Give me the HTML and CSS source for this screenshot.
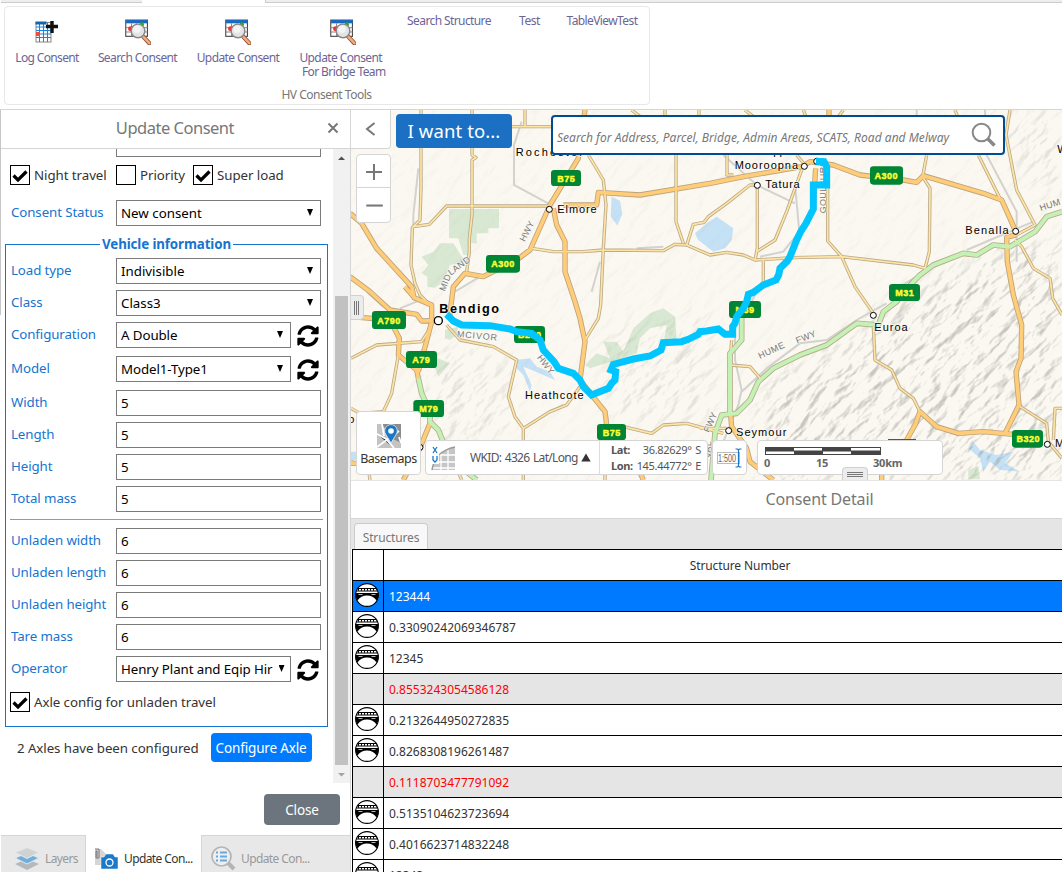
FILE: index.html
```html
<!DOCTYPE html>
<html lang="en">
<head>
<meta charset="utf-8">
<title>HV Consent Tools</title>
<link rel="stylesheet" href="styles.css">
</head>
<body>
<svg class="defs" width="0" height="0" aria-hidden="true">
  <symbol id="search-doc" viewBox="0 0 24 24">
    <rect x=".7" y="1" width="20" height="15" fill="#fff" stroke="#444"/>
    <rect x="1" y="1" width="20" height="3" fill="#1769c4"/>
    <path d="M1 8h20M1 12h20M6 4v12M11 4v12M16 4v12" stroke="#777" stroke-width=".8"/>
    <circle cx="5" cy="9" r="2.2" fill="#e33"/><circle cx="15.500" cy="5" r="2" fill="#2a2"/>
    <path d="M17 16.500l5.500 5.800" stroke="#9b563b" stroke-width="4" stroke-linecap="round"/>
    <path d="M17 16.500l5.500 5.800" stroke="#f0ad84" stroke-width="2.200" stroke-linecap="round"/>
    <circle cx="12" cy="11" r="6.300" fill="#e4e4e4" stroke="#888" stroke-width="1.300"/>
    <circle cx="11" cy="9.500" r="3.500" fill="#f4f4f4"/>
  </symbol>
  <symbol id="refresh" viewBox="0 0 512 512">
    <path d="M370.720 133.280C339.458 104.008 298.888 87.962 255.848 88c-77.458.068-144.328 53.178-162.791 126.850-1.344 5.363-6.122 9.150-11.651 9.150H24.103c-7.498 0-13.194-6.807-11.807-14.176C33.933 94.924 134.813 8 256 8c66.448 0 126.791 26.136 171.315 68.685L463.030 40.970C478.149 25.851 504 36.559 504 57.941V192c0 13.255-10.745 24-24 24H345.941c-21.382 0-32.090-25.851-16.971-40.971l41.750-41.749zM32 296h134.059c21.382 0 32.090 25.851 16.971 40.971l-41.750 41.750c31.262 29.273 71.835 45.319 114.876 45.280 77.418-.070 144.315-53.144 162.787-126.849 1.344-5.363 6.122-9.150 11.651-9.150h57.304c7.498 0 13.194 6.807 11.807 14.176C478.067 417.076 377.187 504 256 504c-66.448 0-126.791-26.136-171.315-68.685L48.970 471.030C33.851 486.149 8 475.441 8 454.059V320c0-13.255 10.745-24 24-24z"/>
  </symbol>
  <symbol id="tick" viewBox="0 0 18 18"><path d="M2.500 9.500L7 14 15.500 5.500" fill="none" stroke="#000" stroke-width="3.200"/></symbol>
  <symbol id="bridge" viewBox="0 0 24 24">
    <circle cx="12" cy="12" r="11.400" fill="#fff" stroke="#000" stroke-width="1.100"/>
    <path d="M2.500 5.500h19M1.500 8h21" stroke="#000" stroke-width="1"/>
    <path d="M3 6.800h18.500" stroke="#000" stroke-width="2" stroke-dasharray="1 2"/>
    <path d="M.8 10H23.200V14.500L21.500 17.500Q18 12.500 12 12.500T2.500 17.500L.8 14.500Z"/>
    <path d="M3.500 11.500h4M16.500 11.500h4" stroke="#fff" stroke-width=".7"/>
  </symbol>
</svg>
<div class="app">
  <div class="ribbon">
    <div class="ribbon-tabs"><span></span><span></span><span></span></div>
    <div class="tools">
      <div class="tool t1"><svg width="24" height="24" viewBox="0 0 24 24"><rect x="1" y="2.500" width="15" height="19.500" fill="#fff" stroke="#888"/><path d="M1 7h15M1 10.500h15M1 14h15M1 17.500h15M4.500 3v19M8.500 3v19M12.500 3v19" stroke="#1585df"/><path d="M.5 3h11" stroke="#1264ad" stroke-width="3"/><rect x="1" y="12" width="4" height="4" fill="#f04a38"/><path d="M11 6.500h12M17 1v12" stroke="#111" stroke-width="3.400"/></svg><span>Log Consent</span></div>
      <div class="tool t2"><svg width="26" height="26"><use href="#search-doc"/></svg><span>Search Consent</span></div>
      <div class="tool t3"><svg width="26" height="26"><use href="#search-doc"/></svg><span>Update Consent</span></div>
      <div class="tool t4"><svg width="26" height="26"><use href="#search-doc"/></svg><span>Update Consent<br>&nbsp;For Bridge Team</span></div>
      <div class="tool text t5">Search Structure</div><div class="tool text t6">Test</div><div class="tool text t7">TableViewTest</div>
      <div class="tools-title">HV Consent Tools</div>
    </div>
  </div>
  <div class="main">
    <div class="edge"></div>
    <section class="panel">
      <header class="panel-head"><span>Update Consent</span><svg width="12" height="12" viewBox="0 0 12 12"><path d="M1.500 1.500l9 9M10.500 1.500l-9 9" stroke="#777" stroke-width="2"/></svg></header>
      <div class="panel-body">
        <div class="form">
          <div class="row cut"><label>Priority</label><div class="field"></div></div>
          <div class="checks">
            <i class="box"><svg width="18" height="18"><use href="#tick"/></svg></i><span class="c1">Night travel</span>
            <i class="box"></i><span class="c2">Priority</span>
            <i class="box"><svg width="18" height="18"><use href="#tick"/></svg></i><span>Super load</span>
          </div>
          <div class="row status"><label>Consent Status</label><div class="field select">New consent</div></div>
          <div class="group">
            <div class="legend">Vehicle information</div>
            <div class="row"><label>Load type</label><div class="field select">Indivisible</div></div>
            <div class="row"><label>Class</label><div class="field select">Class3</div></div>
            <div class="row tall"><label>Configuration</label><div class="field select">A Double</div><svg width="22" height="22"><use href="#refresh"/></svg></div>
            <div class="row tall"><label>Model</label><div class="field select">Model1-Type1</div><svg width="22" height="22"><use href="#refresh"/></svg></div>
            <div class="row"><label>Width</label><div class="field">5</div></div>
            <div class="row"><label>Length</label><div class="field">5</div></div>
            <div class="row"><label>Height</label><div class="field">5</div></div>
            <div class="row"><label>Total mass</label><div class="field">5</div></div>
            <div class="rule"></div>
            <div class="row"><label>Unladen width</label><div class="field">6</div></div>
            <div class="row"><label>Unladen length</label><div class="field">6</div></div>
            <div class="row"><label>Unladen height</label><div class="field">6</div></div>
            <div class="row"><label>Tare mass</label><div class="field">6</div></div>
            <div class="row tall"><label>Operator</label><div class="field select"><span class="clip">Henry Plant and Eqip Hir</span></div><svg width="22" height="22"><use href="#refresh"/></svg></div>
            <div class="checks axle"><i class="box"><svg width="18" height="18"><use href="#tick"/></svg></i><span>Axle config for unladen travel</span></div>
          </div>
          <div class="configured"><span>2 Axles have been configured</span><button class="btn blue">Configure Axle</button></div>
        </div>
        <div class="scroll"><svg width="17" height="18" viewBox="0 0 17 18"><path d="M5 11h7L8.500 7.500z" fill="#505050"/></svg><div class="thumb"></div><svg width="17" height="18" viewBox="0 0 17 18"><path d="M5 8h7L8.500 11.500z" fill="#a3a3a3"/></svg></div>
      </div>
      <div class="panel-foot"><button class="btn grey">Close</button></div>
      <nav class="tabs">
        <div class="tab w1"><svg width="26" height="24" viewBox="0 0 26 24"><path d="M1 17l12-5 12 5-12 6z" fill="#b5b9bb"/><path d="M1 11l12-5 12 5-12 6z" fill="#70aede" stroke="#e8e8e8"/><path d="M1 5.500L13 .5l12 5-12 6z" fill="#cfd2d3" stroke="#e8e8e8"/></svg><span>Layers</span></div>
        <div class="tab active w2"><svg width="24" height="22" viewBox="0 0 24 22"><path d="M2 1h5l5 5v11H1V1" fill="#d5d5d5"/><path d="M1 1h4v9H2V3h1v6" fill="none" stroke="#777"/><path d="M7 9h3l2-3h7l2 3h3v12H7z" fill="#1b79ca" stroke="#fff" stroke-width=".5"/><circle cx="15.500" cy="14.500" r="3.500" fill="none" stroke="#fff" stroke-width="1.300"/></svg><span>Update Con...</span></div>
        <div class="tab w3"><svg width="25" height="25" viewBox="0 0 25 25"><path d="M17 17l6 6" stroke="#b4b4b4" stroke-width="4"/><circle cx="10.500" cy="10.500" r="9.500" fill="#eee" stroke="#b4b4b4" stroke-width="1.700"/><path d="M5 6.500h2M9 6.500h7M5 10.500h2M9 10.500h7M5 14.500h2M9 14.500h7" stroke="#66a9dd" stroke-width="2"/></svg><span>Update Con...</span></div>
      </nav>
    </section>
    <section class="right">
      <div class="map">
        <!-- Map units are thirds of a pixel -->
        <svg class="canvas" width="711" height="370" viewBox="3 15 2133 1110">
          <defs>
            <filter id="relief" x="0" y="0" width="100%" height="100%" color-interpolation-filters="sRGB"><feTurbulence type="fractalNoise" baseFrequency=".012 .032" numOctaves="4" seed="8"/><feColorMatrix values="0 0 0 0 0 0 0 0 0 0 0 0 0 0 0 1 0 0 0 0"/><feDiffuseLighting surfaceScale="20" lighting-color="#fff"><feDistantLight azimuth="230" elevation="50"/></feDiffuseLighting><feColorMatrix values="0 0 0 0 .55 0 0 0 0 .55 0 0 0 0 .53 -1.600 0 0 0 1.120"/></filter>
            <filter id="soft"><feGaussianBlur stdDeviation="35"/></filter>
            <mask id="hills"><rect width="2200" height="1200" fill="#0a0a0a"/><g filter="url(#soft)" fill="#747474"><path d="M1240 850L1500 720 1640 600 1900 460 2136 400V1125H1240z"/><path d="M1900 20H2136V300L2050 250zM780 680L1080 640V940H800zM220 720L460 760 480 950 280 1100z" fill="#3a3a3a"/></g></mask>
            <path id="minor" d="M213 15V250L210 345 187 368 183 480 195 535 210 570 240 600M190 365L238 358 290 303H600M366 15V150L378 158 366 165V330L358 400V440L350 500M525 15V65H485M525 65H610M545 430L610 440H700L760 435 940 437 975 418 1010 420 1030 358 1062 352 1075 335 1130 295 1200 240H1222M715 150L760 225 768 300 760 430 752 600 745 640 705 705M845 15L890 50M945 15V40M1047 15V50M978 150V350L1000 415M1010 420L1080 450 1130 442 1180 450 1215 465 1330 458 1475 455 1690 480 1725 490M1131 150V210H1150M1222 240V430L1215 465M1355 195L1310 320 1275 405 1220 440M1240 465V530M1433 185V408L1475 455 1515 545 1570 625M1730 150L1718 215 1740 250 1738 440 1725 490M1885 150L1955 290M1980 15L1968 90 2000 255 2055 360 1990 395M1995 405L2015 425 2050 490 2100 520 2108 580 2136 630M1185 15L1210 35M1360 15L1370 40M1480 15L1465 35M1815 15L1825 40M1340 150L1365 180M3 760L80 720 215 710 240 670M145 750L125 865 100 920 30 925 3 910M290 660L330 705 430 725 500 765 475 875 495 935 520 970V1125M520 970L600 920 650 900 690 845M820 965L905 985 940 960 1010 955 1120 985M1570 665L1575 765 1625 795 1650 850 1690 880 1710 920M2010 905L2090 955 2095 1010 2136 1060M2136 910H2115L2110 1005M1145 705L1140 780 1200 785 1235 825M1050 970L1130 970M60 1125L55 1090 3 1070M335 1125L320 1090M765 1125V1040"/>
            <path id="major" d="M705 15L685 160 600 300 540 435 500 465 400 515 345 505 310 545 298 640M610 310L620 360 645 410V500L675 590 690 640 705 710 690 825 725 870 765 920 775 1000M640 300H740L745 262 870 270 1080 235 1180 215 1355 185 1380 170 1450 180 1530 210 1660 225 1700 232 1720 212 1900 265 1955 285 1980 340 1997 380M1997 390L1970 397 1972 470 1990 570 2015 660 2013 760 1998 800 2007 900 1965 985M1670 1005L1695 960 1710 920 1760 965 1825 985 1900 980 1990 988M0 325L35 355 80 430 185 545 192 578 245 600V650L228 715 205 800M0 515L60 560 120 615 200 628 215 648 262 647M165 545L195 580M3 635L120 645 148 700 145 750 200 795 205 820M240 955L205 1040 160 1125M1437 15V40M1397 190L1390 300M1142 930L1145 965 1190 1030 1200 1070 1270 1125M3 1075H60M1595 1125V1100M880 1125L865 1090"/>
            <path id="motorway" d="M205 820L215 865 240 920V950L265 975 300 1060 380 1125M1083 1125L1095 985 1115 930 1160 925 1200 885 1225 830 1270 790 1350 750 1430 720 1520 655 1585 660 1600 620 1640 590 1690 530 1710 510 1750 480 1840 445 1880 450 1930 420 1980 425 2055 380 2090 335 2136 320M1140 925V745L1175 705V600"/>
          </defs>
          <rect width="2200" height="1200" fill="#faf8f0"/>
          <g fill="#d9e8d2"><path d="M297 312H447V370H415V385H380V415H360V450H340L325 400H297zM270 415H310L345 470 300 480 280 530 255 548 232 545V515L215 505 235 480 215 455 250 440zM705 780L740 745 780 760 760 710 800 710 820 740 850 670 900 625 940 610 975 635 980 700 940 720 950 660 900 670 870 700 860 745 800 765 720 790zM285 675L325 665 320 690 300 705 285 700zM240 750L300 775 265 815z"/><path d="M1855 1095l30-12 5 40h-35z"/></g>
          <g fill="#c5e1f5"><path d="M785 275l25 12 7 40-15 35-20-28zM1035 385L1070 355 1100 335 1150 370 1145 405 1125 430 1090 440 1045 405zM495 765L540 760 560 785 600 800 615 825 580 810 545 795 520 785 545 840 540 860 520 810 500 790zM3 1040h25l-10 25H3z"/><path d="M1870 1010L1890 1035 1940 1050 1990 1040 1965 1075 2010 1100 1950 1095 1920 1070 1900 1100 1890 1060 1855 1030z"/></g>
          <g mask="url(#hills)"><rect x="-300" y="-700" width="2800" height="2500" transform="rotate(-42 1068 570)" filter="url(#relief)"/></g>
          <g fill="none" stroke="#d3d2cf" stroke-width="6"><path d="M515 50L492 120V240L600 298M205 190L190 330 190 360M1120 150L1220 240 1335 295M1335 240L1348 380 1300 440 1230 455M1700 15V60M1905 15L1910 150 2000 320V470M1650 545L1740 490M1850 435L2050 350M1155 635V765L1175 855 1165 900 1120 1010M1175 860L1250 790 1350 715 1430 705 1520 645 1610 595M750 470L725 560M860 430L940 425M315 560L390 515M600 920L640 900M50 560L100 605M150 610L200 590M1235 530L1205 590"/></g>
          <g fill="none" stroke-linejoin="round">
            <use href="#minor" stroke="#baa98a" stroke-width="10"/><use href="#major" stroke="#bda27c" stroke-width="16"/><use href="#motorway" stroke="#b5ab8c" stroke-width="17"/>
            <use href="#minor" stroke="#ffe4a3" stroke-width="5"/><use href="#major" stroke="#ffcc78" stroke-width="11"/><use href="#motorway" stroke="#c4f1b4" stroke-width="12"/>
          </g>
          <g class="road-name"><text transform="translate(524 412) rotate(-63)">HWY</text><text transform="translate(284 560) rotate(-68)">MID</text><text transform="translate(302 512) rotate(-36)">LAND</text><text transform="translate(320 696) rotate(5)" textLength="122">MCIVOR</text><text transform="translate(560 758) rotate(52)">HWY</text><text transform="translate(1427 325) rotate(-90)">GOULBURN</text><text transform="translate(1230 762) rotate(-25)" textLength="84">HUME</text><text transform="translate(1342 716) rotate(-22)">FWY</text><text transform="translate(1076 984) rotate(-65)">FWY</text><text transform="translate(1082 1060) rotate(-88)">VAL</text><text transform="translate(2072 318) rotate(-18)">HUM</text></g>
          <g class="shields"><rect x="603" y="195" width="90" height="48" rx="10"/><rect x="408" y="450" width="102" height="53" rx="10"/><rect x="1560" y="184" width="99" height="55" rx="10"/><rect x="1617" y="537" width="93" height="51" rx="10"/><rect x="1137" y="588" width="96" height="51" rx="10"/><rect x="66" y="618" width="102" height="54" rx="10"/><rect x="168" y="738" width="93" height="51" rx="10"/><rect x="190" y="885" width="92" height="51" rx="10"/><rect x="492" y="663" width="93" height="51" rx="10"/><rect x="741" y="957" width="87" height="48" rx="10"/><rect x="1986" y="975" width="93" height="53" rx="10"/><rect x="1614" y="1002" width="84" height="30"/></g>
          <g class="shield-text"><text x="649" y="230">B75</text><text x="459" y="486">A300</text><text x="1609" y="222">A300</text><text x="1664" y="573">M31</text><text x="1185" y="624">M39</text><text x="117" y="656">A790</text><text x="214" y="774">A79</text><text x="236" y="921">M79</text><text x="539" y="698">B280</text><text x="785" y="993">B75</text><text x="2035" y="1010">B320</text></g>
          <g class="city"><text x="497" y="152" textLength="202">Rochester</text><text x="622" y="323" textLength="118">Elmore</text><text x="1154" y="191" textLength="190">Mooroopna</text><text x="1246" y="249" textLength="103">Tatura</text><text x="1846" y="388" textLength="130">Benalla</text><text x="1573" y="678" textLength="100">Euroa</text><text x="1158" y="993" textLength="151">Seymour</text><text x="525" y="882" textLength="176">Heathcote</text><text class="big" x="268" y="625" textLength="179">Bendigo</text><text x="2115" y="1027">M</text><text x="2122" y="143">W</text><text x="1270" y="151">pp</text><text x="-5" y="955">o</text></g>
          <g fill="#fff" stroke="#000" stroke-width="3"><circle cx="598" cy="313" r="9"/><circle cx="1363" cy="184" r="9"/><circle cx="1400" cy="169" r="9"/><circle cx="1222" cy="241" r="9"/><circle cx="1997" cy="379" r="9"/><circle cx="1570" cy="631" r="9"/><circle cx="1136" cy="977" r="9"/><circle cx="2092" cy="1018" r="9"/><circle cx="265" cy="647" r="12" stroke-width="4"/><circle cx="210" cy="1027" r="9"/></g>
          <path class="route" d="M1398 169L1422 170 1430 185V240H1390V312L1368 355 1352 380 1340 405 1320 455 1312 468 1290 490 1286 510 1278 525 1240 540 1210 562 1195 568 1190 590 1180 610 1160 635 1155 655 1148 665V688L1125 688 1105 672 1070 678 1050 680 1045 688 1015 703 995 710 940 713 933 735 900 753 850 762 790 778 783 795 797 800 795 825 785 835 775 850 725 870 700 845 690 825 670 805 625 790 612 770 580 735 575 720 570 705 545 685 500 680 480 672 420 662 335 660 310 648 290 628"/>
        </svg>
        <div class="back"><svg width="12" height="14" viewBox="0 0 12 14"><path d="M10.500 1L3 7l7.500 6" fill="none" stroke="#777" stroke-width="2"/></svg></div>
        <div class="zoomer"><svg width="32" height="32" viewBox="0 0 32 32"><path d="M9 17h16M17 9v16" stroke="#777" stroke-width="2"/></svg><svg width="32" height="32" viewBox="0 0 32 32"><path d="M9 17h16" stroke="#777" stroke-width="2"/></svg></div>
        <div class="want">I want to...</div>
        <div class="search"><span>Search for Address, Parcel, Bridge, Admin Areas, SCATS, Road and Melway</span><svg width="26" height="26" viewBox="0 0 26 26"><path d="M16.500 16.500l7 7" stroke="#888" stroke-width="3.600"/><circle cx="10.500" cy="10.500" r="8.800" fill="none" stroke="#888" stroke-width="2"/></svg></div>
        <div class="grip left"></div>
        <div class="basemaps"><svg width="24" height="24" viewBox="0 0 24 24"><rect width="24" height="24" fill="#c3c3c3"/><path d="M5 0h19v19L14 14z" fill="#8c8c8c"/><path d="M0 10L9 15 17 24M0 23L22 7M22 13l2 6M5 0l2 12" stroke="#fff" stroke-width="1.800"/><path d="M14 19L8.500 10a6.300 6.300 0 1111 0z" fill="#1b78c9" stroke="#fff" stroke-width=".7"/><circle cx="14" cy="7" r="2.800" fill="#fff"/></svg><span>Basemaps</span></div>
        <div class="coords"><div class="wkid"><svg width="26" height="26" viewBox="0 0 26 26"><path d="M2 25C4 12 11 5 25 2v23z" fill="#c6c6c6"/><path d="M3 17h22M7 10h18M11 25V8M18 25V4M3 23h22" stroke="#fff" stroke-width="1.300"/><path d="M2 25C4 12 11 5 25 2" fill="none" stroke="#999" stroke-width="1.500"/><rect width="9" height="19" fill="#fff"/><path d="M3 2l4 6M7 2L3 8M3 11v4l2 2 2-2v-4" fill="none" stroke="#1b78c9" stroke-width="1.300"/></svg><span>WKID: 4326 Lat/Long</span><svg width="10" height="9" viewBox="0 0 10 9"><path d="M5 .5L9.700 8.500H.3z" fill="#333"/></svg></div><div class="latlon"><b>Lat:</b><span>36.82629° S</span><b>Lon:</b><span>145.44772° E</span></div></div>
        <div class="ratio"><svg width="26" height="20" viewBox="0 0 26 20"><rect x=".5" y="4.500" width="22" height="11" fill="#fff" stroke="#bbb"/><text x="1" y="14" textLength="18" lengthAdjust="spacingAndGlyphs">1:500</text><path d="M18.500 1h2l1 1 1-1h2M21.500 1v18M18.500 19h2l1-1 1 1h2" fill="none" stroke="#1b78c9" stroke-width="1.200"/></svg></div>
        <div class="scale"><svg width="116" height="8" viewBox="0 0 116 8"><rect width="116" height="8" fill="#444"/><path d="M29 2.300h28M86 2.300h29M1 5.700h28M58 5.700h28" stroke="#fff" stroke-width="2.600"/></svg><span class="s0">0</span><span class="s15">15</span><span class="s30">30km</span></div>
        <div class="grip bottom"></div>
      </div>
      <div class="detail-head">Consent Detail</div>
      <div class="detail-tabs"><div>Structures</div></div>
      <div class="table">
        <div class="tr th"><i></i><span>Structure Number</span></div>
        <div class="tr sel"><i><svg width="24" height="24"><use href="#bridge"/></svg></i><span>123444</span></div>
        <div class="tr"><i><svg width="24" height="24"><use href="#bridge"/></svg></i><span>0.33090242069346787</span></div>
        <div class="tr"><i><svg width="24" height="24"><use href="#bridge"/></svg></i><span>12345</span></div>
        <div class="tr bad"><i></i><span>0.8553243054586128</span></div>
        <div class="tr"><i><svg width="24" height="24"><use href="#bridge"/></svg></i><span>0.2132644950272835</span></div>
        <div class="tr"><i><svg width="24" height="24"><use href="#bridge"/></svg></i><span>0.8268308196261487</span></div>
        <div class="tr bad"><i></i><span>0.1118703477791092</span></div>
        <div class="tr"><i><svg width="24" height="24"><use href="#bridge"/></svg></i><span>0.5135104623723694</span></div>
        <div class="tr"><i><svg width="24" height="24"><use href="#bridge"/></svg></i><span>0.4016623714832248</span></div>
        <div class="tr"><i><svg width="24" height="24"><use href="#bridge"/></svg></i><span>12343</span></div>
      </div>
    </section>
  </div>
</div>
</body>
</html>
```
FILE: styles.css
```css
* { box-sizing: border-box; }
body { margin: 0; background: #fff; color: #333; font: 13.3px/18px "Noto Sans", "Open Sans", sans-serif; }
svg { display: block; flex: none; }
.defs { position: absolute; }
.app { width: 1062px; height: 872px; overflow: hidden; display: flex; flex-direction: column; }
.ribbon { height: 110px; flex: none; border-bottom: 1px solid #d5d5d5; display: flex; flex-direction: column; }
.ribbon-tabs { display: grid; grid-template-columns: 141px 123px 1fr; height: 3px; padding-left: 1px; }
.ribbon-tabs span { background: #eee; border-bottom: 1px solid #ccc; }
.ribbon-tabs span:nth-child(2) { background: #fff; border: 0; }
.ribbon-tabs span:nth-child(3) { border-left: 1px solid #ccc; }
.tools { margin: 3px 0 0 4px; width: 646px; height: 99px; border: 1px solid #e8e8e8; border-radius: 4px; display: grid; grid-template-columns: 84px 97px 104px 105px 108px 53px 92px; grid-template-rows: 81px 1fr; color: #6b6596; font-size: 12px; line-height: 14px; letter-spacing: -.6px; white-space: nowrap; }
.tool { display: flex; flex-direction: column; align-items: center; padding-top: 12px; gap: 6px; }
.tool svg { height: 26px; }
.t1 span { letter-spacing: -.65px; }
.tool.text { padding-top: 7px; letter-spacing: -.6px; }
.tool.t6 { letter-spacing: -.4px; }
.tools-title { grid-column: 1 / -1; color: #777; text-align: center; letter-spacing: -.5px; }
.main { flex: 1; min-height: 0; display: flex; }
.edge { width: 1px; height: 205px; background: #c6c6c6; flex: none; }
.panel { width: 350px; flex: none; border-right: 1px solid #d5d5d5; display: flex; flex-direction: column; }
.panel-head { height: 39px; border-bottom: 1px solid #d5d5d5; display: flex; align-items: center; justify-content: flex-end; padding: 0 11px 3px 0; color: #777; font-size: 16.500px; letter-spacing: -.5px; }
.panel-head svg { margin: 0 0 0 93px; }
.panel-body { height: 634px; display: flex; overflow: hidden; }
.form { width: 332px; padding: 0 5px 0 4px; }
.row { display: grid; grid-template-columns: 105px 175px 1fr; height: 26px; margin-bottom: 6px; }
.row label { color: #1674cf; line-height: 24px; white-space: nowrap; letter-spacing: -.1px; }
.field { grid-column: 2 / 4; border: 1px solid #7b7b7b; padding: 0 4px; line-height: 24px; color: #000; background: #fff; display: flex; justify-content: space-between; overflow: hidden; white-space: nowrap; width: 205px; }
.select::after { content: ""; width: 6px; height: 7px; margin: 8px 3px 0 6px; background: #000; clip-path: polygon(0 0, 100% 0, 50% 100%); flex: none; }
.tall { height: 28px; }
.tall .field { grid-column: 2; width: 175px; height: 26px; letter-spacing: -.08px; }
.tall svg { margin: 3px 0 0 6px; }
.cut { margin: -18px 0 8px 6px; }
.cut label { line-height: 18px; }
.checks { display: flex; align-items: center; height: 20px; margin-left: 5px; white-space: nowrap; letter-spacing: -.06px; }
.box { width: 20px; height: 20px; border: 1px solid #000; flex: none; margin-right: 4px; }
.c1 { width: 82px; }
.c2 { width: 53px; }
.status { margin: 15px 0 0 6px; }
.group { position: relative; margin-top: 18px; border: 1px solid #1674cf; width: 323px; height: 483px; padding: 13px 5px 0; }
.legend { position: absolute; top: -10px; left: 94px; width: 133px; text-align: center; background: #fff; color: #1674cf; font-weight: bold; white-space: nowrap; letter-spacing: -.1px; }
.rule { margin: 7px -1px 8px; height: 1px; background: #999; }
.axle { margin: 8px 0 0 -1px; }
.configured { display: flex; align-items: center; gap: 12px; margin: 6px 0 0 12px; white-space: nowrap; letter-spacing: -.07px; }
.btn { border: 0; border-radius: 4px; padding: 0; color: #fff; font: 13.500px/20px "Noto Sans", sans-serif; letter-spacing: -.15px; }
.blue { width: 101px; height: 29px; background: #007bff; }
.grey { width: 76px; height: 31px; background: #6c757d; }
.scroll { width: 17px; background: #f1f1f1; display: flex; flex-direction: column; justify-content: space-between; }
.thumb { height: 471px; margin: 129px 2px 0; background: #c1c1c1; }
.panel-foot { height: 52px; display: flex; justify-content: flex-end; padding: 11px 10px 0; }
.tabs { flex: 1; display: flex; color: #999; font-size: 12px; letter-spacing: -.6px; white-space: nowrap; }
.tab { background: #e8e8e8; border-top: 1px solid #d5d5d5; display: flex; align-items: center; padding: 9px 0 0 13px; gap: 5px; }
.active { background: #fff; border-color: #fff; color: #333; padding-left: 8px; gap: 6px; }
.w1 { width: 85px; border-right: 1px solid #d5d5d5; }
.w2 { width: 115px; }
.w3 { flex: 1; padding-left: 9px; border-left: 1px solid #d5d5d5; }
.right { flex: 1; min-width: 0; }
.map { position: relative; height: 371px; border-bottom: 1px solid #e5e5e5; overflow: hidden; }
.road-name { font: 27px "Liberation Sans"; fill: #777; letter-spacing: 1px; stroke: #faf8f0; stroke-width: 3px; paint-order: stroke; }
.shields { fill: #008535; }
.shield-text { font: bold 27px "Liberation Sans", sans-serif; fill: #ff3; stroke: #ff3; stroke-width: 1.3px; letter-spacing: 1.5px; text-anchor: middle; }
.city { font: 33px "Liberation Sans"; fill: #000; stroke: #faf8f0; stroke-width: 4px; paint-order: stroke; }
.big { font-weight: bold; font-size: 38px; }
.route { fill: none; stroke: #00c5ff; stroke-width: 21px; stroke-linejoin: miter; stroke-miterlimit: 2; }
.back, .zoomer, .want, .search, .basemaps, .coords, .ratio, .scale, .grip { position: absolute; background: #fff; }
.back { left: 0; top: 0; width: 40px; height: 39px; border: 1px solid #d5d5d5; border-width: 0 1px 1px 0; border-radius: 0 0 4px 0; padding: 12px 0 0 13px; }
.zoomer { left: 5px; top: 44px; width: 35px; height: 69px; border: 1px solid #d5d5d5; border-radius: 4px; }
.zoomer svg + svg { border-top: 1px solid #d5d5d5; width: 33px; height: 34px; }
.want { left: 45px; top: 4px; width: 116px; height: 34px; border-radius: 4px; background: #1b70c4; color: #fff; text-align: center; font-size: 18.500px; line-height: 34px; letter-spacing: .1px; }
.search { left: 200px; top: 5px; width: 454px; height: 40px; border: 2px solid #004b91; border-radius: 4px; display: flex; justify-content: space-between; padding: 5px 6px 0 4px; color: #777; font-style: italic; font-size: 12px; line-height: 31px; letter-spacing: .03px; white-space: nowrap; }
.grip { background: #ececec; border: 1px solid #d0d0d0; }
.grip.left { left: 0; top: 185px; width: 13px; height: 25px; border-radius: 0 4px 4px 0; border-left: 0; background: linear-gradient(90deg, #777 1px, transparent 1px 2px, #777 2px 3px, transparent 3px 4px, #777 4px 5px, transparent 5px) 3px 5px / 9px 14px no-repeat #ececec; }
.grip.bottom { left: 491px; top: 357px; width: 26px; height: 14px; border-radius: 4px 4px 0 0; border-bottom: 0; background: repeating-linear-gradient(#777 0 1px, transparent 1px 2px) 4px 4px / 16px 5px no-repeat #ececec; }
.basemaps { left: 5px; top: 301px; width: 65px; height: 64px; border: 1px solid #d5d5d5; border-radius: 4px; display: flex; flex-direction: column; align-items: center; padding-top: 12px; gap: 2px; font-size: 12.500px; letter-spacing: -.5px; }
.coords { left: 74px; top: 330px; width: 283px; height: 35px; border: 1px solid #d5d5d5; border-radius: 4px; display: flex; font-size: 12px; letter-spacing: -.67px; word-spacing: 1px; color: #555; white-space: nowrap; }
.wkid { width: 174px; border-right: 1px solid #ddd; display: flex; align-items: center; padding-left: 4px; }
.wkid span { margin: 0 3px 0 14px; }
.latlon { flex: 1; display: grid; grid-template-columns: auto auto; justify-content: space-between; line-height: 14px; padding: 2px 6px 0 11px; font-size: 11px; letter-spacing: -.3px; }
.latlon b { letter-spacing: -.4px; }
.latlon span { text-align: right; }
.ratio { left: 361px; top: 330px; width: 35px; height: 35px; border: 1px solid #d5d5d5; border-radius: 4px; padding: 7px 0 0 4px; }
.ratio text { font: 10px "Liberation Sans"; fill: #666; }
.scale { left: 406px; top: 330px; width: 186px; height: 35px; border: 1px solid #d5d5d5; border-radius: 4px; padding: 6px 0 4px 7px; display: grid; grid-template-columns: 51px 51px 1fr; font-size: 11px; line-height: 13px; font-weight: bold; color: #666; letter-spacing: -.2px; }
.scale svg { grid-column: 1 / -1; }
.s0 { margin-left: -1px; }
.s30 { margin-left: 6px; }
.detail-head { height: 38px; text-align: center; padding-left: 226px; width: 711px; color: #777; font-size: 16px; line-height: 36px; border-bottom: 1px solid #d5d5d5; letter-spacing: -.15px; }
.detail-tabs { height: 30px; background: #e5e5e5; padding: 4px 0 0 3px; }
.detail-tabs div { width: 74px; height: 26px; border: 1px solid #ccc; border-bottom: 0; border-radius: 4px 4px 0 0; background: #f8f8f8; color: #777; font-size: 12px; line-height: 28px; text-align: center; letter-spacing: -.15px; }
.table { margin-left: 1px; border: 1px solid #000; border-right: 0; }
.tr { height: 31px; display: flex; border-bottom: 1px solid #000; font-size: 12px; line-height: 31px; letter-spacing: .01px; }
.tr i { width: 31px; border-right: 1px solid #000; padding: 2px 0 0 2px; flex: none; }
.tr span { flex: 1; padding-left: 5px; }
.th span { text-align: center; padding-left: 34px; letter-spacing: -.1px; }
.sel { background: #007bff; color: #fff; }
.bad { background: #e5e5e5; color: #f00; }
```
